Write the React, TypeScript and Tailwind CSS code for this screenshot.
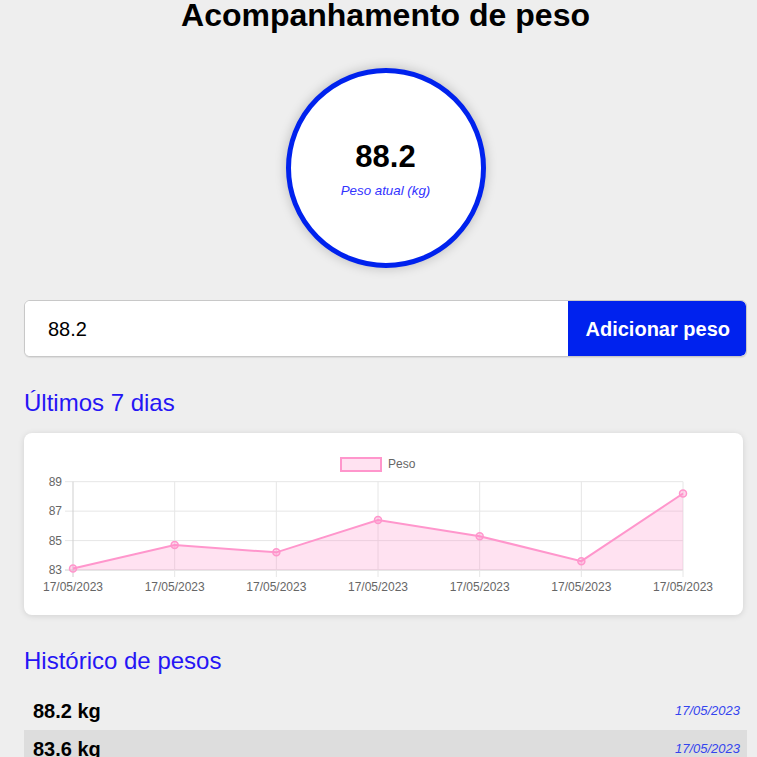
import React from 'react';

const pesos = [83.1, 84.7, 84.2, 86.4, 85.3, 83.6, 88.2];
const data = '17/05/2023';

// chart geometry, relative to the card
const X0 = 49;
const STEP = 101.67;
const yOf = (v: number) => 48.7 + (89 - v) * 14.72;

const Chart = () => {
  const pts = pesos.map((v, i) => [X0 + i * STEP, yOf(v)] as const);
  const line = pts.map(([x, y]) => `${x},${y}`).join(' ');
  const area = `${X0},${yOf(83)} ${line} ${X0 + 6 * STEP},${yOf(83)}`;
  const ticks = [89, 87, 85, 83];

  return (
    <svg width="719" height="182" className="block font-['Liberation_Sans',Arial,sans-serif]">
      <rect x="317" y="25" width="40" height="13" fill="rgba(255,140,200,0.25)" stroke="#ff96cc" strokeWidth="2" />
      <text x="364" y="35" fontSize="12" fill="#666">Peso</text>

      {ticks.map((t) => (
        <g key={t}>
          <line x1="41" x2={X0 + 6 * STEP} y1={yOf(t)} y2={yOf(t)} stroke={t === 83 ? '#cfcfcf' : '#e6e6e6'} />
          <text x="38" y={yOf(t) + 4} fontSize="12" fill="#666" textAnchor="end">
            {t}
          </text>
        </g>
      ))}

      {pts.map(([x], i) => (
        <g key={i}>
          <line x1={x} x2={x} y1={yOf(89)} y2={yOf(83) + 7} stroke={i === 0 ? '#cfcfcf' : '#e6e6e6'} />
          <text x={x} y="158" fontSize="12" fill="#666" textAnchor="middle">
            {data}
          </text>
        </g>
      ))}

      <polygon points={area} fill="rgba(255,140,200,0.25)" />
      <polyline points={line} fill="none" stroke="#ff96cc" strokeWidth="2" />
      {pts.map(([x, y], i) => (
        <circle key={i} cx={x} cy={y} r="3.5" fill="rgba(255,140,200,0.35)" stroke="#ff96cc" strokeWidth="1.5" />
      ))}
    </svg>
  );
};

export default function App() {
  const historico = [...pesos].reverse();

  return (
    <div className="min-h-screen bg-[#eeeeee] font-['Liberation_Sans',Arial,sans-serif]">
      <div className="ml-[24px] w-[723px]">
        <h1 className="text-center text-[32px] font-bold leading-[30px] text-black">Acompanhamento de peso</h1>

        <div className="mx-auto mt-[38px] flex size-[200px] flex-col items-center rounded-full border-[5px] border-[#0022ee] bg-white pt-[68px] shadow-[0_0_12px_rgba(0,0,0,0.22)]">
          <div className="text-[31px] font-bold leading-[32px] text-black">88.2</div>
          <div className="mt-[10px] text-[13.33px] italic leading-[16px] text-[#3333ff]">Peso atual (kg)</div>
        </div>

        <div className="mt-[32px] flex h-[57px] overflow-hidden rounded-[6px] border border-[#c8c8c8] bg-white shadow-[0_1px_1px_rgba(0,0,0,0.08)]">
          <input
            defaultValue="88.2"
            className="min-w-0 flex-1 bg-white pl-[23px] text-[20px] text-black outline-none"
          />
          <button className="rounded-r-[5px] bg-[#0022ee] pl-[18px] pr-[16px] text-[20px] font-bold text-white">
            Adicionar peso
          </button>
        </div>

        <h2 className="mt-[32px] text-[24px] leading-[28px] text-[#2515f5]">Últimos 7 dias</h2>

        <div className="mt-[16px] h-[182px] w-[719px] rounded-[8px] bg-white shadow-[0_1px_6px_rgba(0,0,0,0.12)]">
          <Chart />
        </div>

        <h2 className="mt-[32px] text-[24px] leading-[28px] text-[#2515f5]">Histórico de pesos</h2>

        <ul className="mt-[17px]">
          {historico.map((p, i) => (
            <li
              key={i}
              className={`flex h-[38px] items-center justify-between pl-[9px] pr-[7px] ${i % 2 === 1 ? 'bg-[#dddddd]' : ''}`}
            >
              <span className="text-[20px] font-bold text-black">{p.toFixed(1)} kg</span>
              <span className="text-[13px] italic text-[#3344ee]">{data}</span>
            </li>
          ))}
        </ul>
      </div>
    </div>
  );
}
